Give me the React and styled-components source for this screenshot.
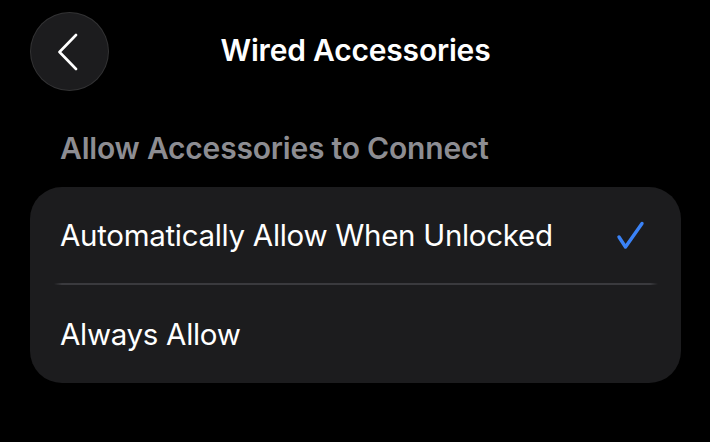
import React from "react";
import styled, { createGlobalStyle } from "styled-components";

const GlobalStyle = createGlobalStyle`
  html, body {
    margin: 0;
    padding: 0;
    background: #000;
  }
  body {
    font-family: Inter, "Noto Sans", "Liberation Sans", sans-serif;
    -webkit-font-smoothing: antialiased;
  }
`;

const Page = styled.div`
  width: 710px;
  height: 442px;
  box-sizing: border-box;
  padding: 12px 29px 0 30px;
  background: #000;
  color: #fff;
  overflow: hidden;
`;

const NavBar = styled.header`
  display: grid;
  grid-template-columns: 79px 1fr 79px;
  align-items: center;
  height: 79px;
`;

const BackButton = styled.button`
  width: 79px;
  height: 79px;
  box-sizing: border-box;
  border-radius: 50%;
  border: 1px solid rgba(255, 255, 255, 0.1);
  background: #1c1c1e;
  display: flex;
  align-items: center;
  justify-content: center;
  padding: 0;
  cursor: pointer;
`;

const Title = styled.h1`
  margin: -3px 0 0;
  text-align: center;
  font-size: 30px;
  font-weight: 600;
  letter-spacing: -0.2px;
  color: #fff;
`;

const SectionHeader = styled.h2`
  margin: 37px 0 0 30px;
  font-size: 30px;
  line-height: 40px;
  font-weight: 600;
  letter-spacing: -0.2px;
  color: #8d8d92;
`;

const Card = styled.div`
  margin-top: 19px;
  background: #1c1c1e;
  border-radius: 32px;
  overflow: hidden;
`;

const Row = styled.div`
  display: flex;
  align-items: center;
  justify-content: space-between;
  height: ${(p) => p.$height}px;
  padding: 0 36px 0 30px;
  font-size: 29.5px;
  font-weight: 400;
  letter-spacing: -0.3px;
  color: #fff;
`;

const Divider = styled.div`
  height: 2px;
  margin: 0 23px 0 24px;
  background: linear-gradient(
    to right,
    rgba(58, 58, 62, 0) 0,
    #3a3a3e 8px,
    #3a3a3e calc(100% - 8px),
    rgba(58, 58, 62, 0) 100%
  );
`;

const ChevronLeft = () => (
  <svg width="24" height="40" viewBox="0 0 24 40" fill="none">
    <path
      d="M18 3 L1.5 20 L18 37"
      stroke="#fff"
      strokeWidth="2.6"
      strokeLinecap="round"
      strokeLinejoin="round"
    />
  </svg>
);

const Checkmark = () => (
  <svg width="30" height="30" viewBox="0 0 30 30" fill="none">
    <path
      d="M4 17 L10.5 27 L27 3.5"
      stroke="#3a82f6"
      strokeWidth="3.4"
      strokeLinecap="round"
      strokeLinejoin="round"
    />
  </svg>
);

const options = [
  { label: "Automatically Allow When Unlocked", selected: true, height: 96 },
  { label: "Always Allow", selected: false, height: 98 },
];

export default function App() {
  return (
    <>
      <GlobalStyle />
      <Page>
        <NavBar>
          <BackButton aria-label="Back">
            <ChevronLeft />
          </BackButton>
          <Title>Wired Accessories</Title>
          <span />
        </NavBar>
        <SectionHeader>Allow Accessories to Connect</SectionHeader>
        <Card>
          {options.map((o, i) => (
            <React.Fragment key={o.label}>
              {i > 0 && <Divider />}
              <Row $height={o.height}>
                <span>{o.label}</span>
                {o.selected && <Checkmark />}
              </Row>
            </React.Fragment>
          ))}
        </Card>
      </Page>
    </>
  );
}
